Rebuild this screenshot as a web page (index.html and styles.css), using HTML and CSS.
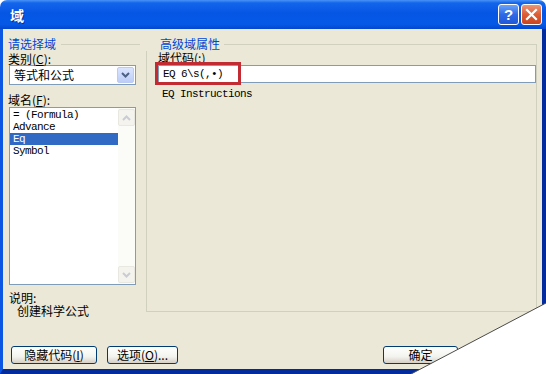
FILE: index.html
```html
<!DOCTYPE html>
<html lang="zh-CN">
<head>
    <meta charset="UTF-8">
    <meta name="viewport" content="width=device-width, initial-scale=1.0">
    <title>域</title>
    <link rel="stylesheet" href="styles.css">
</head>
<body>
    <div class="window">
        <div class="titlebar">
            <span class="title">域</span>
            <div class="caption-btn help">?</div>
            <div class="caption-btn close">
                <svg width="13" height="13" viewBox="0 0 13 13">
                    <path d="M2 2 L11 11 M11 2 L2 11" stroke="#fff" stroke-width="2.2" stroke-linecap="square"/>
                </svg>
            </div>
        </div>

        <div class="client">
            <div class="panes">
                <!-- left: field chooser -->
                <div class="left-pane">
                    <div class="group-head">
                        <span class="group-title">请选择域</span>
                        <span class="group-line"></span>
                    </div>
                    <div class="label">类别(<u>C</u>):</div>
                    <div class="combo">
                        <span class="combo-text">等式和公式</span>
                        <span class="combo-btn">
                            <svg width="9" height="6" viewBox="0 0 9 6">
                                <path d="M1 1 L4.5 4.5 L8 1" fill="none" stroke="#4d6185" stroke-width="2"/>
                            </svg>
                        </span>
                    </div>
                    <div class="label label-gap">域名(<u>F</u>):</div>
                    <div class="listbox">
                        <ul class="items">
                            <li>= (Formula)</li>
                            <li>Advance</li>
                            <li class="selected">Eq</li>
                            <li>Symbol</li>
                        </ul>
                        <div class="scrollbar">
                            <span class="sb-btn">
                                <svg width="9" height="6" viewBox="0 0 9 6">
                                    <path d="M1 5 L4.5 1.5 L8 5" fill="none" stroke="#c9ccd4" stroke-width="2"/>
                                </svg>
                            </span>
                            <span class="sb-btn">
                                <svg width="9" height="6" viewBox="0 0 9 6">
                                    <path d="M1 1 L4.5 4.5 L8 1" fill="none" stroke="#c9ccd4" stroke-width="2"/>
                                </svg>
                            </span>
                        </div>
                    </div>
                    <div class="description">
                        <div class="desc-label">说明:</div>
                        <div class="desc-text">创建科学公式</div>
                    </div>
                </div>

                <!-- right: advanced properties -->
                <div class="right-pane">
                    <div class="group-head">
                        <span class="group-title">高级域属性</span>
                        <span class="group-line corner"></span>
                    </div>
                    <div class="group-body">
                        <div class="label">域代码(<u>:</u>)</div>
                        <div class="code-box">
                            EQ 6\s(,•)
                            <span class="highlight"></span>
                        </div>
                        <div class="mono-note">EQ Instructions</div>
                    </div>
                </div>
            </div>

            <div class="buttons">
                <button class="btn btn-hide">隐藏代码(<u>I</u>)</button>
                <button class="btn btn-options">选项(<u>O</u>)...</button>
                <button class="btn btn-ok">确定</button>
                <button class="btn btn-cancel">取消</button>
            </div>
        </div>

        <!-- curled corner of the photo -->
        <svg class="page-curl" width="546" height="374" viewBox="0 0 546 374">
            <polygon points="546,303 546,374 411,374" fill="#fff"/>
            <line x1="546" y1="303" x2="411" y2="374" stroke="#4a4a4a" stroke-width="1"/>
        </svg>
    </div>
</body>
</html>
```

FILE: styles.css
```css
body {
    margin: 0;
    background: #fff;
    font-family: "Noto Sans CJK SC", "Noto Sans", sans-serif;
    font-size: 12px;
    color: #000;
}
.window {
    position: relative;
    width: 546px;
    height: 374px;
    display: flex;
    flex-direction: column;
    overflow: hidden;
}
.titlebar {
    height: 29px;
    flex: none;
    display: flex;
    align-items: center;
    padding: 0 4px 0 10px;
    border-radius: 7px 7px 0 0;
    background: linear-gradient(#4a92f8 0%, #1465ec 10%, #0656e4 45%, #0558e6 85%, #0446cc 100%);
}
.title {
    flex: 1;
    color: #fff;
    font-weight: bold;
    font-size: 14px;
    line-height: 16px;
    text-shadow: 1px 1px 0 #0a2f9a;
}
.caption-btn {
    width: 21px;
    height: 21px;
    box-sizing: border-box;
    border: 1px solid #fff;
    border-radius: 3px;
    margin-left: 2px;
    display: flex;
    align-items: center;
    justify-content: center;
}
.help {
    color: #fff;
    font-family: "Liberation Sans", sans-serif;
    font-weight: bold;
    font-size: 15px;
    background: linear-gradient(#6aa3fa, #2e6ae6 50%, #1f58d8);
}
.close {
    background: linear-gradient(#eb9677, #dc5e36 50%, #cb4620);
}
.client {
    flex: 1;
    display: flex;
    flex-direction: column;
    background: #ebe8d7;
    border-left: 3px solid #0b56e2;
    border-right: 4px solid #032b9c;
    border-bottom: 5px solid #032b9c;
}
.panes {
    height: 300px;
    display: flex;
    align-items: flex-start;
}
.group-head {
    display: flex;
    align-items: center;
    height: 14px;
}
.group-title {
    color: #0046d5;
    line-height: 14px;
}
.group-line {
    flex: 1;
    height: 0;
    margin-left: 5px;
    border-top: 1px solid #d0d0bf;
}
.label {
    line-height: 13px;
}

/* left pane */
.left-pane {
    width: 138px;
    padding: 8px 0 0 5px;
}
.left-pane .group-head {
    margin-right: 6px;
}
.left-pane .label {
    margin-top: 1px;
}
.left-pane .label-gap {
    margin-top: 8px;
    line-height: 14px;
}
.combo {
    width: 127px;
    height: 20px;
    box-sizing: border-box;
    margin-left: 1px;
    border: 1px solid #7f9db9;
    background: #fff;
    display: flex;
    align-items: center;
    padding: 1px;
}
.combo-text {
    flex: 1;
    padding-left: 3px;
    line-height: 16px;
}
.combo-btn {
    width: 17px;
    height: 16px;
    box-sizing: border-box;
    border: 1px solid #bccbf4;
    border-radius: 2px;
    background: linear-gradient(#dbe5fd, #bccdf7);
    display: flex;
    align-items: center;
    justify-content: center;
}
.listbox {
    width: 127px;
    height: 178px;
    box-sizing: border-box;
    margin-left: 1px;
    border: 1px solid #7f9db9;
    background: #fff;
    display: flex;
}
.items {
    flex: 1;
    list-style: none;
    margin: 1px 0 0;
    padding: 0;
    font-family: "Liberation Mono", monospace;
    font-size: 11px;
    letter-spacing: -0.6px;
}
.items li {
    line-height: 12px;
    padding-left: 3px;
}
.items li.selected {
    background: #316ac5;
    color: #fff;
}
.scrollbar {
    width: 17px;
    display: flex;
    flex-direction: column;
    justify-content: space-between;
    background: #fbfbf8;
    padding: 1px 0;
}
.sb-btn {
    height: 17px;
    box-sizing: border-box;
    border: 1px solid #e8e8e0;
    border-radius: 2px;
    background: #f4f3ee;
    display: flex;
    align-items: center;
    justify-content: center;
}
.description {
    margin-top: 6px;
    line-height: 13px;
    padding-left: 1px;
}
.desc-text {
    padding-left: 8px;
}

/* right pane */
.right-pane {
    width: 391px;
    padding-top: 8px;
}
.right-pane .group-head {
    align-items: stretch;
    padding-left: 14px;
}
.group-line.corner {
    height: auto;
    margin-top: 7px;
    margin-left: 4px;
    border-right: 1px solid #d0d0bf;
}
.group-body {
    height: 260px;
    border: 1px solid #d0d0bf;
    border-top: none;
    padding-left: 11px;
}
.group-body .label {
    line-height: 14px;
}
.code-box {
    position: relative;
    height: 18px;
    box-sizing: border-box;
    border: 1px solid #7f9db9;
    background: #fff;
    padding-left: 4px;
    font-family: "Liberation Mono", monospace;
    font-size: 11px;
    letter-spacing: -0.6px;
    line-height: 16px;
}
.highlight {
    position: absolute;
    left: -4px;
    top: -4px;
    width: 86px;
    height: 23px;
    box-sizing: border-box;
    border: 3px solid #c22b31;
}
.mono-note {
    margin-top: 5px;
    padding-left: 4px;
    font-family: "Liberation Mono", monospace;
    font-size: 11px;
    letter-spacing: -0.6px;
    line-height: 12px;
}

/* bottom buttons */
.buttons {
    display: flex;
    padding: 17px 0 0 8px;
}
.btn {
    height: 18px;
    box-sizing: border-box;
    border: 1px solid #003c74;
    border-radius: 3px;
    background: linear-gradient(#fff, #f3f3ee 60%, #d6d0c5);
    font-family: "Noto Sans CJK SC", sans-serif;
    font-size: 12px;
    line-height: 14px;
    padding: 0;
    color: #000;
}
.btn-hide {
    width: 86px;
}
.btn-options {
    width: 71px;
    margin-left: 10px;
}
.btn-ok {
    width: 75px;
    margin-left: 205px;
}
.btn-cancel {
    width: 75px;
    margin-left: 8px;
}
.page-curl {
    position: absolute;
    left: 0;
    top: 0;
    pointer-events: none;
}
```
